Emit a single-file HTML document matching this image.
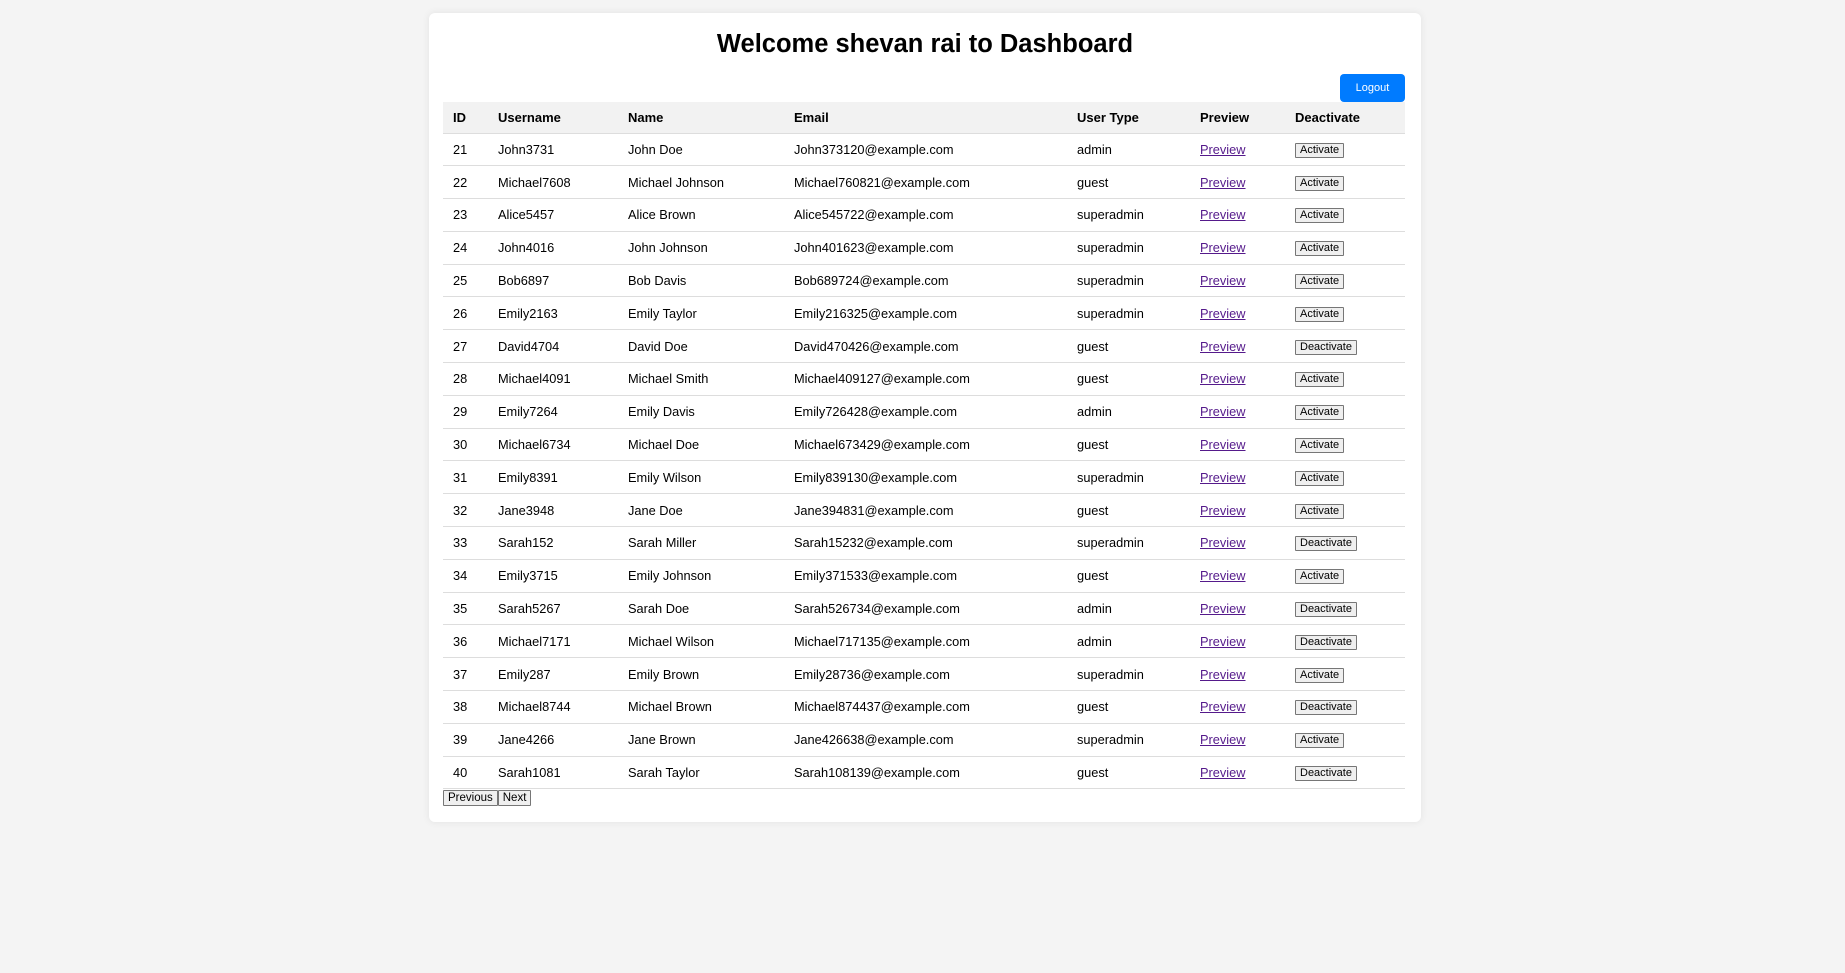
<!DOCTYPE html>
<html><head><meta charset="utf-8"><style>
*{box-sizing:border-box}
body{margin:0;background:#f4f4f4;font-family:"Liberation Sans",Arial,sans-serif;font-size:12.8px;color:#000;width:1845px;height:973px;overflow:hidden}
.c{position:absolute;left:429px;top:13px;width:992px;height:809px;background:#fff;border-radius:6px;box-shadow:0 0 8px rgba(0,0,0,0.08)}
h1{position:absolute;left:0;right:0;top:15px;margin:0;text-align:center;font-size:25.5px;font-weight:bold;line-height:32px}
.lo{position:absolute;left:911px;top:61px;width:65px;height:28px;background:#007bff;color:#fff;border:none;border-radius:4px;font-size:11px;font-family:inherit}
table{position:absolute;left:14px;top:89px;width:962px;border-collapse:collapse;table-layout:fixed}
th{background:#f2f2f2;text-align:left;font-weight:bold;height:31px;padding:0 0 0 10px;border-bottom:1px solid #ddd;font-size:13px}
td{height:32.8px;padding:0 0 0 10px;border-bottom:1px solid #ddd}
a{color:#551a8b;text-decoration:underline}
.b{font-family:inherit;font-size:11px;background:#efefef;border:1px solid #767676;padding:0 4px;height:15px;line-height:13px;border-radius:1px}
.pg{position:absolute;left:14px;top:777px;display:flex}
.pg button{font-family:inherit;font-size:11.5px;background:#efefef;border:1px solid #767676;height:16px;padding:0 4px;line-height:14px;border-radius:1px}
</style></head><body><div class="c">
<h1>Welcome shevan rai to Dashboard</h1>
<button class="lo">Logout</button>
<table>
<colgroup><col style="width:45px"><col style="width:130px"><col style="width:166px"><col style="width:283px"><col style="width:123px"><col style="width:95px"><col style="width:120px"></colgroup>
<tr><th>ID</th><th>Username</th><th>Name</th><th>Email</th><th>User Type</th><th>Preview</th><th>Deactivate</th></tr>
<tr><td>21</td><td>John3731</td><td>John Doe</td><td>John373120@example.com</td><td>admin</td><td><a>Preview</a></td><td><button class="b">Activate</button></td></tr>
<tr><td>22</td><td>Michael7608</td><td>Michael Johnson</td><td>Michael760821@example.com</td><td>guest</td><td><a>Preview</a></td><td><button class="b">Activate</button></td></tr>
<tr><td>23</td><td>Alice5457</td><td>Alice Brown</td><td>Alice545722@example.com</td><td>superadmin</td><td><a>Preview</a></td><td><button class="b">Activate</button></td></tr>
<tr><td>24</td><td>John4016</td><td>John Johnson</td><td>John401623@example.com</td><td>superadmin</td><td><a>Preview</a></td><td><button class="b">Activate</button></td></tr>
<tr><td>25</td><td>Bob6897</td><td>Bob Davis</td><td>Bob689724@example.com</td><td>superadmin</td><td><a>Preview</a></td><td><button class="b">Activate</button></td></tr>
<tr><td>26</td><td>Emily2163</td><td>Emily Taylor</td><td>Emily216325@example.com</td><td>superadmin</td><td><a>Preview</a></td><td><button class="b">Activate</button></td></tr>
<tr><td>27</td><td>David4704</td><td>David Doe</td><td>David470426@example.com</td><td>guest</td><td><a>Preview</a></td><td><button class="b">Deactivate</button></td></tr>
<tr><td>28</td><td>Michael4091</td><td>Michael Smith</td><td>Michael409127@example.com</td><td>guest</td><td><a>Preview</a></td><td><button class="b">Activate</button></td></tr>
<tr><td>29</td><td>Emily7264</td><td>Emily Davis</td><td>Emily726428@example.com</td><td>admin</td><td><a>Preview</a></td><td><button class="b">Activate</button></td></tr>
<tr><td>30</td><td>Michael6734</td><td>Michael Doe</td><td>Michael673429@example.com</td><td>guest</td><td><a>Preview</a></td><td><button class="b">Activate</button></td></tr>
<tr><td>31</td><td>Emily8391</td><td>Emily Wilson</td><td>Emily839130@example.com</td><td>superadmin</td><td><a>Preview</a></td><td><button class="b">Activate</button></td></tr>
<tr><td>32</td><td>Jane3948</td><td>Jane Doe</td><td>Jane394831@example.com</td><td>guest</td><td><a>Preview</a></td><td><button class="b">Activate</button></td></tr>
<tr><td>33</td><td>Sarah152</td><td>Sarah Miller</td><td>Sarah15232@example.com</td><td>superadmin</td><td><a>Preview</a></td><td><button class="b">Deactivate</button></td></tr>
<tr><td>34</td><td>Emily3715</td><td>Emily Johnson</td><td>Emily371533@example.com</td><td>guest</td><td><a>Preview</a></td><td><button class="b">Activate</button></td></tr>
<tr><td>35</td><td>Sarah5267</td><td>Sarah Doe</td><td>Sarah526734@example.com</td><td>admin</td><td><a>Preview</a></td><td><button class="b">Deactivate</button></td></tr>
<tr><td>36</td><td>Michael7171</td><td>Michael Wilson</td><td>Michael717135@example.com</td><td>admin</td><td><a>Preview</a></td><td><button class="b">Deactivate</button></td></tr>
<tr><td>37</td><td>Emily287</td><td>Emily Brown</td><td>Emily28736@example.com</td><td>superadmin</td><td><a>Preview</a></td><td><button class="b">Activate</button></td></tr>
<tr><td>38</td><td>Michael8744</td><td>Michael Brown</td><td>Michael874437@example.com</td><td>guest</td><td><a>Preview</a></td><td><button class="b">Deactivate</button></td></tr>
<tr><td>39</td><td>Jane4266</td><td>Jane Brown</td><td>Jane426638@example.com</td><td>superadmin</td><td><a>Preview</a></td><td><button class="b">Activate</button></td></tr>
<tr><td>40</td><td>Sarah1081</td><td>Sarah Taylor</td><td>Sarah108139@example.com</td><td>guest</td><td><a>Preview</a></td><td><button class="b">Deactivate</button></td></tr>
</table>
<div class="pg"><button>Previous</button><button>Next</button></div>
</div></body></html>
